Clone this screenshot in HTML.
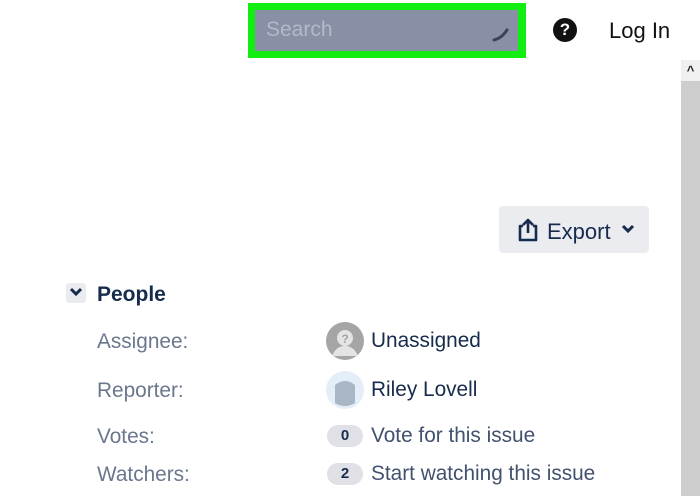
<!DOCTYPE html>
<html><head><meta charset="utf-8"><style>
*{margin:0;padding:0;box-sizing:border-box}
body{width:700px;height:496px;overflow:hidden;background:#fff;font-family:"Liberation Sans",sans-serif;position:relative;color:#172b4d}
.abs{position:absolute}
.lbl{position:absolute;left:97px;font-size:20.8px;color:#6b778c}
.val{position:absolute;font-size:20.8px;color:#172b4d}
.badge{position:absolute;left:327px;width:36px;height:22px;border-radius:11px;background:#dfe1e6;font-size:15px;font-weight:bold;text-align:center;line-height:22px;color:#172b4d}
</style></head><body>
<div class="abs" style="left:248px;top:3px;width:278px;height:55px;background:#12ee12"></div>
<div class="abs" style="left:255px;top:10px;width:263px;height:41px;background:#8890a6"></div>
<div class="abs" style="left:266px;top:18px;font-size:21px;color:#b4b9c8">Search</div>
<svg class="abs" style="left:490px;top:24px" width="24" height="20"><path d="M4 16 Q12 14 17 6" stroke="#3a4256" stroke-width="3" fill="none" stroke-linecap="round"/></svg>
<div class="abs" style="left:553px;top:18px;width:24px;height:24px;border-radius:50%;background:#111;color:#fff;font-weight:bold;font-size:17px;text-align:center;line-height:24px">?</div>
<div class="abs" style="left:609px;top:18px;font-size:22px;color:#111">Log In</div>
<div class="abs" style="left:681px;top:60px;width:19px;height:21px;background:#f0f0f0;font-size:13px;text-align:center;line-height:22px;color:#222;font-weight:bold">^</div>
<div class="abs" style="left:681px;top:81px;width:19px;height:415px;background:#cdcdcd"></div>
<div class="abs" style="left:499px;top:206px;width:150px;height:47px;border-radius:4px;background:#ebecf0"></div>
<svg class="abs" style="left:516px;top:217px" width="24" height="26"><path d="M7 9H4v14h16V9h-3M12 16V3M7 8l5-5 5 5" stroke="#172b4d" stroke-width="2.6" fill="none" stroke-linejoin="round"/></svg>
<div class="abs" style="left:547px;top:219px;font-size:22px;color:#172b4d">Export</div>
<svg class="abs" style="left:620px;top:223px" width="16" height="12"><path d="M3 3l5 5 5-5" stroke="#172b4d" stroke-width="3" fill="none"/></svg>
<div class="abs" style="left:66px;top:283px;width:20px;height:20px;border-radius:3px;background:#ebecf0"></div>
<svg class="abs" style="left:68px;top:286px" width="16" height="12"><path d="M3 3l5 5 5-5" stroke="#172b4d" stroke-width="3" fill="none"/></svg>
<div class="abs" style="left:97px;top:283px;font-size:21px;font-weight:bold;color:#172b4d">People</div>
<div class="lbl" style="top:330px">Assignee:</div>
<div class="lbl" style="top:379px">Reporter:</div>
<div class="lbl" style="top:425px">Votes:</div>
<div class="lbl" style="top:463px">Watchers:</div>
<svg class="abs" style="left:326px;top:322px" width="38" height="38"><circle cx="19" cy="19" r="19" fill="#a5a5a5"/><path d="M6 34 Q10 24 19 24 Q28 24 32 34Z" fill="#e4e4e4"/><circle cx="19" cy="16" r="8" fill="#e4e4e4"/><text x="19" y="21" font-size="12" font-weight="bold" text-anchor="middle" fill="#a5a5a5" font-family="Liberation Sans">?</text></svg>
<div class="val" style="left:371px;top:329px">Unassigned</div>
<svg class="abs" style="left:326px;top:371px" width="38" height="38"><circle cx="19" cy="19" r="19" fill="#e4eef8"/><path d="M9 32 V14 Q19 6 29 14 V32 Q19 38 9 32Z" fill="#a8b6c6"/></svg>
<div class="val" style="left:371px;top:378px">Riley Lovell</div>
<div class="badge" style="top:425px">0</div>
<div class="val" style="left:371px;top:424px;color:#42526e">Vote for this issue</div>
<div class="badge" style="top:463px">2</div>
<div class="val" style="left:371px;top:462px;color:#42526e">Start watching this issue</div>
</body></html>
